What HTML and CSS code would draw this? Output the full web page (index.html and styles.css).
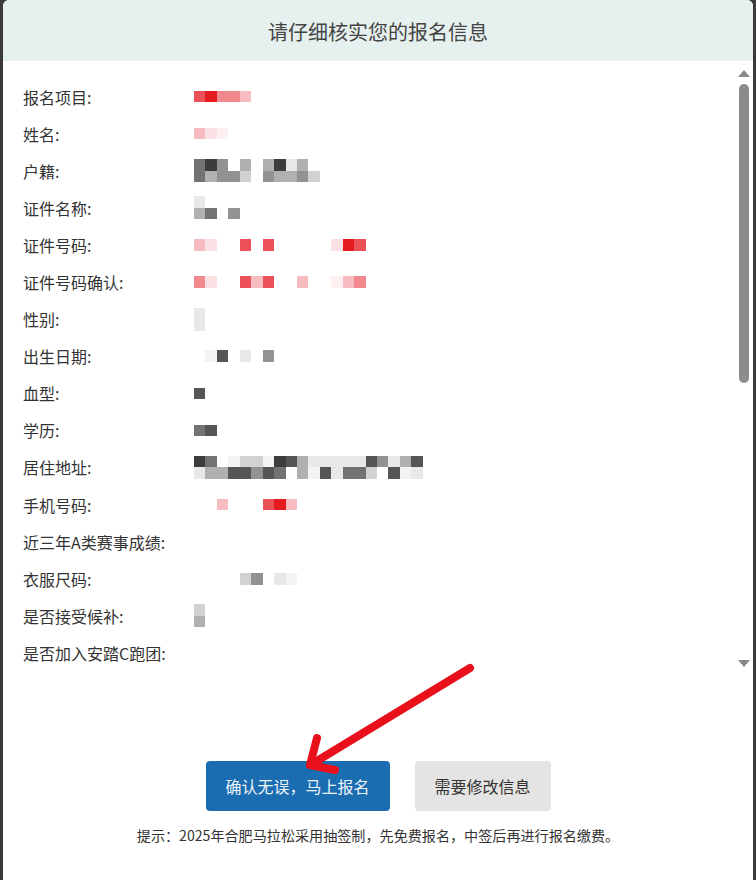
FILE: index.html
```html
<!DOCTYPE html>
<html lang="zh-CN">
<head>
<meta charset="utf-8">
<title>请仔细核实您的报名信息</title>
<link rel="stylesheet" href="styles.css">
</head>
<body>
<div class="modal">
  <div class="header">请仔细核实您的报名信息</div>
  <div class="scroll">
    <div class="rows">
      <div class="row"><span class="label">报名项目:</span><div class="mosaic"><div class="mrow"><i class="r2"></i><i class="r1"></i><i class="r3"></i><i class="r3"></i><i class="r4"></i></div></div></div>
      <div class="row"><span class="label">姓名:</span><div class="mosaic"><div class="mrow"><i class="r4"></i><i class="r5"></i><i class="r6"></i></div></div></div>
      <div class="row"><span class="label">户籍:</span><div class="mosaic">
        <div class="mrow"><i class="k3"></i><i class="k1"></i><i class="k4"></i><i></i><i class="k5"></i><i></i><i class="k5"></i><i class="k1"></i><i class="k7"></i><i class="k5"></i></div>
        <div class="mrow"><i class="k3"></i><i class="k5"></i><i class="k4"></i><i class="k4"></i><i class="k6"></i><i></i><i class="k4"></i><i class="k5"></i><i class="k5"></i><i class="k4"></i><i class="k6"></i></div>
      </div></div>
      <div class="row"><span class="label">证件名称:</span><div class="mosaic">
        <div class="mrow"><i class="k7"></i></div>
        <div class="mrow"><i class="k5"></i><i class="k3"></i><i></i><i class="k4"></i></div>
      </div></div>
      <div class="row"><span class="label">证件号码:</span><div class="mosaic"><div class="mrow"><i class="r4"></i><i class="r5"></i><i></i><i></i><i class="r2"></i><i></i><i class="r2"></i><i></i><i></i><i></i><i></i><i></i><i class="r5"></i><i class="r1"></i><i class="r2"></i></div></div></div>
      <div class="row"><span class="label">证件号码确认:</span><div class="mosaic"><div class="mrow"><i class="r3"></i><i class="r5"></i><i></i><i></i><i class="r2"></i><i class="r4"></i><i class="r2"></i><i></i><i></i><i class="r4"></i><i></i><i></i><i class="r6"></i><i class="r4"></i><i class="r3"></i></div></div></div>
      <div class="row"><span class="label">性别:</span><div class="mosaic">
        <div class="mrow"><i class="k7"></i></div>
        <div class="mrow"><i class="k7"></i></div>
      </div></div>
      <div class="row"><span class="label">出生日期:</span><div class="mosaic"><div class="mrow"><i></i><i class="k8"></i><i class="k2"></i><i></i><i class="k7"></i><i></i><i class="k4"></i></div></div></div>
      <div class="row"><span class="label">血型:</span><div class="mosaic"><div class="mrow"><i class="k2"></i></div></div></div>
      <div class="row"><span class="label">学历:</span><div class="mosaic"><div class="mrow"><i class="k3"></i><i class="k2"></i></div></div></div>
      <div class="row"><span class="label">居住地址:</span><div class="mosaic">
        <div class="mrow"><i class="k1"></i><i class="k3"></i><i></i><i class="k8"></i><i class="k6"></i><i class="k6"></i><i class="k8"></i><i class="k1"></i><i class="k2"></i><i class="k5"></i><i class="k7"></i><i class="k7"></i><i class="k7"></i><i class="k7"></i><i class="k7"></i><i class="k2"></i><i class="k4"></i><i class="k7"></i><i class="k5"></i><i class="k2"></i></div>
        <div class="mrow"><i class="k7"></i><i class="k5"></i><i class="k5"></i><i class="k2"></i><i class="k2"></i><i class="k4"></i><i class="k2"></i><i class="k3"></i><i></i><i class="k5"></i><i class="k8"></i><i class="k2"></i><i class="k7"></i><i class="k3"></i><i class="k3"></i><i class="k6"></i><i></i><i class="k2"></i><i class="k8"></i><i class="k7"></i></div>
      </div></div>
      <div class="row"><span class="label">手机号码:</span><div class="mosaic"><div class="mrow"><i></i><i></i><i class="r4"></i><i></i><i></i><i></i><i class="r2"></i><i class="r1"></i><i class="r4"></i></div></div></div>
      <div class="row"><span class="label">近三年A类赛事成绩:</span><div class="mosaic"></div></div>
      <div class="row"><span class="label">衣服尺码:</span><div class="mosaic"><div class="mrow"><i></i><i></i><i></i><i></i><i class="k6"></i><i class="k4"></i><i></i><i class="k7"></i><i class="k8"></i></div></div></div>
      <div class="row"><span class="label">是否接受候补:</span><div class="mosaic">
        <div class="mrow"><i class="k6"></i></div>
        <div class="mrow"><i class="k5"></i></div>
      </div></div>
      <div class="row"><span class="label">是否加入安踏C跑团:</span><div class="mosaic"></div></div>
    </div>
    <div class="scrollbar">
      <div class="bar-top">
        <span class="arrow-up"></span>
        <span class="thumb"></span>
      </div>
      <span class="arrow-down"></span>
    </div>
  </div>
  <div class="footer">
    <div class="buttons">
      <button class="btn btn-primary">确认无误，马上报名</button>
      <button class="btn btn-default">需要修改信息</button>
    </div>
    <p class="hint">提示：2025年合肥马拉松采用抽签制，先免费报名，中签后再进行报名缴费。</p>
  </div>
</div>
<svg class="annotation" width="756" height="880" viewBox="0 0 756 880" xmlns="http://www.w3.org/2000/svg">
  <g stroke="#e8101a" stroke-width="8" stroke-linecap="round" stroke-linejoin="round" fill="none">
    <path d="M470 668 L312 764"/>
    <path d="M317 738 L310 765 L335 770"/>
  </g>
</svg>
</body>
</html>
```
FILE: styles.css
```css
* { box-sizing: border-box; }

html, body {
  margin: 0;
  padding: 0;
}

body {
  width: 756px;
  height: 880px;
  overflow: hidden;
  background: #3a3a3a;
  font-family: "Noto Sans CJK SC", "Noto Sans", sans-serif;
  color: #333;
  position: relative;
}

.modal {
  margin: 0 3px;
  height: 880px;
  background: #ffffff;
  border-radius: 6px 6px 0 0;
  overflow: hidden;
  display: flex;
  flex-direction: column;
}

.header {
  height: 61px;
  flex: none;
  display: flex;
  align-items: center;
  justify-content: center;
  background: #e6f0ee;
  font-size: 20px;
  color: #444;
  padding-top: 2px;
}

.scroll {
  height: 614px;
  flex: none;
  display: grid;
  grid-template-columns: 1fr 18px;
}

.rows {
  padding: 17px 0 0 20px;
}

.row {
  height: 37.1px;
  display: grid;
  grid-template-columns: 171px 1fr;
  align-items: center;
}

.label {
  font-size: 16px;
  line-height: 20px;
  color: #333;
  white-space: nowrap;
}

.mosaic {
  display: flex;
  flex-direction: column;
}

.mrow {
  display: flex;
}

.mrow i {
  display: block;
  width: 11.45px;
  height: 11.5px;
  flex: none;
}

.r1 { background: #e51c1f; }
.r2 { background: #ec5058; }
.r3 { background: #f2898e; }
.r4 { background: #f6bcc0; }
.r5 { background: #fbe1e3; }
.r6 { background: #fdf0f1; }

.k1 { background: #3c3c3c; }
.k2 { background: #555555; }
.k3 { background: #737373; }
.k4 { background: #929292; }
.k5 { background: #b0b0b0; }
.k6 { background: #d2d2d2; }
.k7 { background: #e8e8e8; }
.k8 { background: #f3f3f3; }

.scrollbar {
  display: flex;
  flex-direction: column;
  justify-content: space-between;
  align-items: center;
  padding: 9px 0 8px;
}

.bar-top {
  display: flex;
  flex-direction: column;
  align-items: center;
  gap: 7px;
}

.arrow-up {
  width: 0;
  height: 0;
  border-left: 6px solid transparent;
  border-right: 6px solid transparent;
  border-bottom: 7px solid #8a8a8a;
}

.arrow-down {
  width: 0;
  height: 0;
  border-left: 6px solid transparent;
  border-right: 6px solid transparent;
  border-top: 7px solid #8a8a8a;
}

.thumb {
  display: block;
  width: 10px;
  height: 299px;
  border-radius: 5px;
  background: #8c8c8c;
}

.footer {
  padding-top: 86px;
  display: flex;
  flex-direction: column;
  align-items: center;
}

.buttons {
  display: flex;
  gap: 25px;
}

.btn {
  height: 50px;
  border: none;
  border-radius: 4px;
  font-family: "Noto Sans CJK SC", "Noto Sans", sans-serif;
  font-size: 16px;
  padding: 0;
}

.btn-primary {
  width: 184px;
  background: #1a6db0;
  color: #eef4fa;
}

.btn-default {
  width: 136px;
  background: #e4e4e4;
  color: #333;
}

.hint {
  margin: 14px 0 0;
  font-size: 14.1px;
  line-height: 20px;
  color: #333;
}

.annotation {
  position: absolute;
  left: 0;
  top: 0;
  pointer-events: none;
}
```
